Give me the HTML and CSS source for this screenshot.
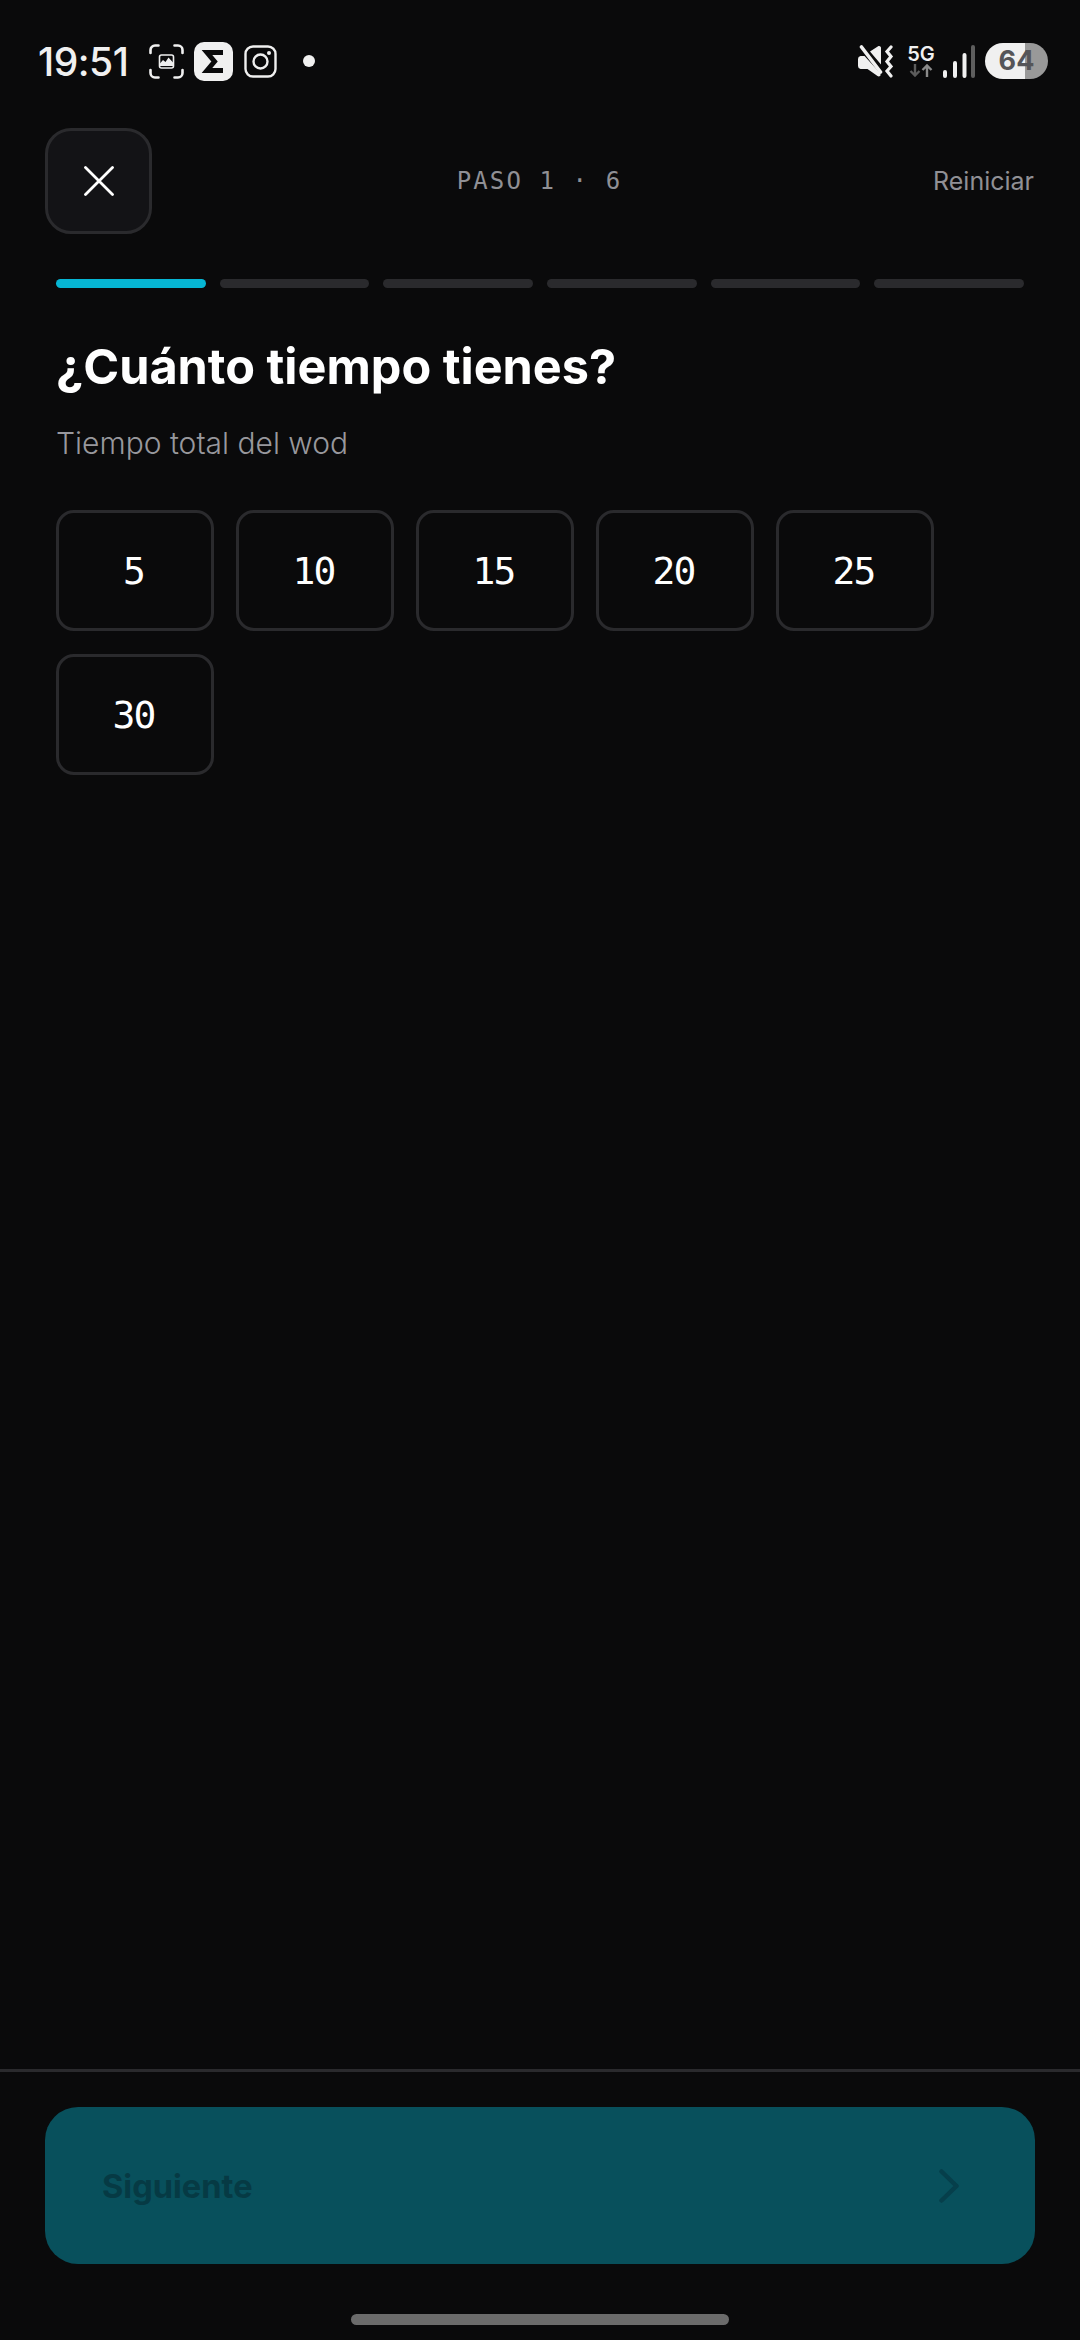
FILE: index.html
```html
<!DOCTYPE html>
<html lang="es">
<head>
    <meta charset="UTF-8">
    <meta name="viewport" content="width=device-width, initial-scale=1.0">
    <title>Generar wod</title>
    <link rel="stylesheet" href="styles.css">
</head>
<body>
    <div class="status-bar">
        <div class="status-left">
            <span class="clock">19:51</span>
            <svg class="icon-shot" viewBox="0 0 35 35" fill="none" stroke="#f0f0f0" stroke-width="2.6" stroke-linecap="round">
                <path d="M1.500 9V6a4.500 4.500 0 0 1 4.500-4.500h3.500M25.500 1.500H29A4.500 4.500 0 0 1 33.500 6v3M33.500 26v3a4.500 4.500 0 0 1-4.500 4.500h-3.500M9.500 33.500H6A4.500 4.500 0 0 1 1.500 29v-3"/>
                <rect x="10.500" y="11" width="14" height="13" rx="2" stroke-width="1.600"/>
                <path d="M10.500 20l3.500-4 2.500 2 3-4.500 5 5.500v3h-14z" fill="#f0f0f0" stroke="none"/>
            </svg>
            <span class="app-sigma">
                <svg viewBox="0 0 39 39" fill="none" stroke="#0a0a0b" stroke-width="5" stroke-linejoin="miter">
                    <path d="M29 10.500H13L20.500 19.500 13 28.500H29"/>
                </svg>
            </span>
            <svg class="icon-insta" viewBox="0 0 33 33" fill="none" stroke="#f0f0f0" stroke-width="2.400">
                <rect x="1.500" y="1.500" width="30" height="30" rx="7.500"/>
                <circle cx="16.500" cy="16.500" r="7"/>
                <circle cx="25" cy="8" r="2" fill="#f0f0f0" stroke="none"/>
            </svg>
            <span class="notif-dot"></span>
        </div>
        <div class="status-right">
            <svg class="icon-mute" viewBox="0 0 36 33" fill="#f0f0f0">
                <path d="M0 14q0-2.500 2.500-3h4l16 17.500v2q-1.500 1.500-3 .5l-10-7h-7q-2.500-.5-2.500-3zM12 6.500l8.500-5.500q2-.5 2.500 1.500v17z"/>
                <path d="M3.500 2l19 25" fill="none" stroke="#f0f0f0" stroke-width="3.600" stroke-linecap="round"/>
                <path d="M33 2l-4 4.500 4 5-4 5 4 5-4 4.500 4 5" fill="none" stroke="#f0f0f0" stroke-width="3.200" stroke-linecap="round"/>
            </svg>
            <span class="net">
                <span class="net-label">5G</span>
                <svg class="net-arrows" viewBox="0 0 24 13" fill="none" stroke-width="2.400">
                    <path d="M6 0v11M1.500 7l4.500 4.500L10.500 7" stroke="#5c5c5c"/>
                    <path d="M18 13V2M13.500 6L18 1.500 22.500 6" stroke="#8a8a8a"/>
                </svg>
            </span>
            <svg class="icon-signal" viewBox="0 0 32 33" stroke-width="4" stroke-linecap="round">
                <path d="M2 31v-4M12 31V18M21.500 31V10" stroke="#f0f0f0"/>
                <path d="M30 31V2" stroke="#5e5e5e"/>
            </svg>
            <span class="battery">64</span>
        </div>
    </div>

    <header class="top-nav">
        <button class="close-btn">
            <svg viewBox="0 0 30 30" fill="none" stroke="#ffffff" stroke-width="2.800" stroke-linecap="round">
                <path d="M1.500 1.500l27 27M28.500 1.500l-27 27"/>
            </svg>
        </button>
        <span class="step-label">PASO 1 · 6</span>
        <a class="reset-link">Reiniciar</a>
    </header>

    <div class="progress">
        <span class="progress-seg active"></span>
        <span class="progress-seg"></span>
        <span class="progress-seg"></span>
        <span class="progress-seg"></span>
        <span class="progress-seg"></span>
        <span class="progress-seg"></span>
    </div>

    <main class="step">
        <h1>¿Cuánto tiempo tienes?</h1>
        <p class="step-sub">Tiempo total del wod</p>
        <div class="options">
            <button class="option">5</button>
            <button class="option">10</button>
            <button class="option">15</button>
            <button class="option">20</button>
            <button class="option">25</button>
            <button class="option">30</button>
        </div>
    </main>

    <footer class="bottom">
        <button class="next-btn">
            <span>Siguiente</span>
            <svg viewBox="0 0 20 34" fill="none" stroke="#063f4b" stroke-width="4.500" stroke-linecap="round" stroke-linejoin="round">
                <path d="M2.500 2.500L17.500 17 2.500 31.500"/>
            </svg>
        </button>
        <div class="home-bar"></div>
    </footer>
</body>
</html>
```

FILE: styles.css
```css
:root {
    --bg-color: #0a0a0b;
    --line: #2a2a2d;
    --muted: #909095;
    --light: #f0f0f0;
    --accent: #06b6d4;
}

* {
    box-sizing: border-box;
}

body {
    margin: 0;
    width: 1080px;
    height: 2340px;
    background-color: var(--bg-color);
    color: #ffffff;
    font-family: 'Inter', sans-serif;
    display: flex;
    flex-direction: column;
}

button {
    font-family: inherit;
    padding: 0;
    cursor: pointer;
}

/* status bar */
.status-bar {
    height: 122px;
    padding: 0 32px 0 38px;
    display: flex;
    justify-content: space-between;
    align-items: center;
    flex-shrink: 0;
}

.status-left, .status-right {
    display: flex;
    align-items: center;
}

.clock {
    font-size: 39px;
    font-weight: 500;
    color: var(--light);
    width: 111px;
    letter-spacing: -0.5px;
}

.icon-shot {
    width: 35px;
    height: 35px;
    margin-right: 10px;
}

.app-sigma {
    width: 39px;
    height: 39px;
    background: var(--light);
    border-radius: 10px;
    margin-right: 11px;
    display: flex;
}

.app-sigma svg {
    width: 39px;
    height: 39px;
}

.icon-insta {
    width: 33px;
    height: 33px;
    margin-right: 26px;
}

.notif-dot {
    width: 12px;
    height: 12px;
    border-radius: 50%;
    background: var(--light);
}

.icon-mute {
    width: 36px;
    height: 33px;
    margin-right: 12px;
}

.net {
    width: 30px;
    margin-right: 7px;
    display: flex;
    flex-direction: column;
    align-items: center;
}

.net-label {
    font-size: 20px;
    font-weight: 600;
    line-height: 18px;
    color: var(--light);
}

.net-arrows {
    width: 24px;
    height: 13px;
    margin-top: 1px;
}

.icon-signal {
    width: 32px;
    height: 33px;
    margin-right: 10px;
}

.battery {
    width: 63px;
    height: 36px;
    border-radius: 18px;
    background: linear-gradient(to right, var(--light) 40px, #999999 40px);
    color: #555558;
    font-size: 27px;
    font-weight: 700;
    line-height: 36px;
    text-align: center;
}

/* top nav */
.top-nav {
    margin-top: 6px;
    padding: 0 46px 0 45px;
    display: grid;
    grid-template-columns: 1fr auto 1fr;
    align-items: center;
}

.close-btn {
    width: 107px;
    height: 106px;
    background: #131316;
    border: 3px solid var(--line);
    border-radius: 26px;
    display: flex;
    align-items: center;
    justify-content: center;
}

.close-btn svg {
    width: 30px;
    height: 30px;
}

.step-label {
    font-family: 'DejaVu Sans Mono', monospace;
    font-size: 24px;
    letter-spacing: 2.1px;
    color: var(--muted);
    white-space: pre;
}

.reset-link {
    justify-self: end;
    font-size: 25px;
    color: var(--muted);
}

/* progress */
.progress {
    margin-top: 45px;
    padding: 0 56px;
    display: flex;
    gap: 14px;
}

.progress-seg {
    flex: 1;
    height: 9px;
    background: var(--line);
    border-radius: 5px;
}

.progress-seg.active {
    background: var(--accent);
}

/* step content */
.step {
    flex: 1;
    padding: 0 56px;
}

h1 {
    margin: 47px 0 0;
    font-size: 48.6px;
    line-height: 64px;
    font-weight: 700;
}

.step-sub {
    margin: 25px 0 0;
    font-size: 30px;
    line-height: 38px;
    font-weight: 300;
    color: #98989d;
}

.options {
    margin-top: 48px;
    display: flex;
    flex-wrap: wrap;
    gap: 23px 22px;
}

.option {
    width: 158px;
    height: 121px;
    padding-right: 3px;
    background: transparent;
    border: 3px solid var(--line);
    border-radius: 18px;
    color: #ffffff;
    font-family: 'DejaVu Sans Mono', monospace;
    font-size: 38px;
    letter-spacing: -2px;
}

/* footer */
.bottom {
    border-top: 3px solid var(--line);
    padding: 35px 45px 15px;
    display: flex;
    flex-direction: column;
    align-items: center;
}

.next-btn {
    width: 990px;
    height: 157px;
    background: #08505c;
    border: none;
    border-radius: 33px;
    padding: 0 76px 0 57px;
    display: flex;
    justify-content: space-between;
    align-items: center;
    color: #063a44;
    font-size: 32.6px;
    font-weight: 700;
}

.next-btn svg {
    width: 20px;
    height: 34px;
}

.home-bar {
    width: 378px;
    height: 11px;
    margin-top: 50px;
    background: #6b6b6b;
    border-radius: 6px;
}
```
